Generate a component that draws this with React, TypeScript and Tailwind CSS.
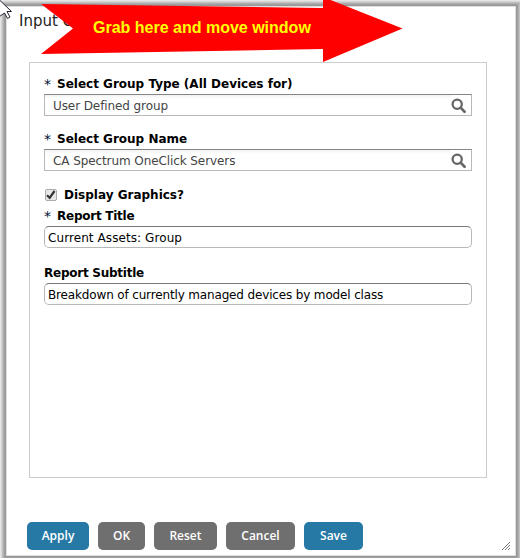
import type { ReactNode } from 'react';

// ── Small pieces ───────────────────────────────────────────────
function Label({ children, required, tight }: { children: ReactNode; required?: boolean; tight?: boolean }) {
  return (
    <div className="flex h-4 items-center whitespace-nowrap text-xs font-bold leading-4 text-black">
      {required && <span className="w-[13px] text-sm font-normal text-[#013]">*</span>}
      <span className={tight ? 'tracking-[-0.25px]' : ''}>{children}</span>
    </div>
  );
}

function SearchIcon() {
  return (
    <svg width="17" height="17" viewBox="0 0 17 17" fill="none" stroke="#666">
      <circle cx="6.2" cy="7.2" r="4.6" strokeWidth="2.3" />
      <path d="M9.8 10.9l3.8 3.9" strokeWidth="2.7" strokeLinecap="round" />
    </svg>
  );
}

function LookupField({ value }: { value: string }) {
  return (
    <div className="flex h-[22px] items-center border border-[#b8b8b8] border-t-[#858585] bg-white">
      <div className="flex h-full flex-1 items-center bg-gradient-to-b from-[#f3f3f3] to-white to-20% pl-2 pt-0.5 text-xs tracking-[-0.09px] text-[#444]">
        <span className="whitespace-nowrap">{value}</span>
      </div>
      <div className="flex h-full w-5 items-end pb-px">
        <SearchIcon />
      </div>
    </div>
  );
}

function TextField({ value, tracking }: { value: string; tracking: string }) {
  return (
    <div className="flex h-[22px] items-center rounded-[5px] border border-[#b8b8b8] border-t-[#777] bg-white pl-[3px] pt-px text-xs text-black">
      <span className={`whitespace-nowrap ${tracking}`}>{value}</span>
    </div>
  );
}

const BUTTONS = [
  { label: 'Apply', style: 'w-[62px] bg-[#2679a5]' },
  { label: 'OK', style: 'w-[47px] bg-[#6f6f6f]' },
  { label: 'Reset', style: 'w-[63px] bg-[#6f6f6f]' },
  { label: 'Cancel', style: 'w-[69px] bg-[#6f6f6f]' },
  { label: 'Save', style: 'w-[59px] bg-[#2679a5]' },
];

// ── Overlays ───────────────────────────────────────────────────
function GrabArrow() {
  return (
    <div className="absolute left-[41px] top-0 h-[62px] w-[362px]">
      <svg className="absolute inset-0" width="362" height="62" viewBox="0 0 362 62">
        <path d="M0 4L282 8V-3L361.5 28.5L282 62V49L0 54L32 28.5Z" fill="#f00" />
      </svg>
      <span className="absolute left-[52px] top-[19px] whitespace-nowrap font-['Liberation_Sans',sans-serif] text-base font-bold leading-[18px] text-[#ff0]">
        Grab here and move window
      </span>
    </div>
  );
}

function Cursor() {
  return (
    <svg className="absolute left-0 top-0" width="13" height="20" viewBox="0 0 13 20">
      <path d="M-.5 0L11.5 11.5H7L10 17L7.5 18.5L4.5 13L-.5 16.5Z" fill="#fff" stroke="#223" />
    </svg>
  );
}

function ResizeGrip() {
  return (
    <svg className="absolute bottom-2 right-2.5" width="8" height="8" viewBox="0 0 8 8" stroke="#777">
      <path d="M0 8L8 0M3 8L8 3M6 8L8 6" />
    </svg>
  );
}

// ── Dialog ─────────────────────────────────────────────────────
export default function App() {
  return (
    <div className="relative flex h-[558px] w-[520px] overflow-hidden bg-[#e5e5e5] pb-[3px] pl-[7px] pr-[5px] pt-[7px] font-['DejaVu_Sans',sans-serif]">
      <div className="flex flex-1 flex-col bg-white shadow-[0_0_0_1px_#dedede,0_0_0_2px_#999,0_0_0_3px_#a0a0a0,0_0_0_4px_#aeaeae,0_0_0_5px_#c2c2c2,0_0_0_6px_#d6d6d6]">
        <header className="h-[55px] pl-3 pt-[5px] text-[15px] leading-[18px] text-[#222]">Input C</header>

        <main className="ml-[22px] flex h-[416px] w-[458px] flex-col border border-[#ccc] px-3.5 pt-[13px]">
          <Label required>Select Group Type (All Devices for)</Label>
          <div className="mt-0.5"><LookupField value="User Defined group" /></div>

          <div className="mt-[15px]"><Label required>Select Group Name</Label></div>
          <div className="mt-0.5"><LookupField value="CA Spectrum OneClick Servers" /></div>

          <div className="mt-4 flex h-4 items-center">
            <span className="ml-px flex size-3 items-center justify-center rounded-[2px] border border-[#aaa] bg-[#e8e8e8]">
              <svg width="10" height="10" viewBox="0 0 10 10" fill="none" stroke="#333" strokeWidth="2.2">
                <path d="M1 5.2L3.7 7.8L8.5 1" />
              </svg>
            </span>
            <div className="ml-[7px]"><Label>Display Graphics?</Label></div>
          </div>

          <div className="mt-[5px]"><Label required tight>Report Title</Label></div>
          <div className="mt-0.5"><TextField value="Current Assets: Group" tracking="tracking-[0.08px]" /></div>

          <div className="mt-[17px]"><Label tight>Report Subtitle</Label></div>
          <div className="mt-0.5">
            <TextField value="Breakdown of currently managed devices by model class" tracking="tracking-[-0.15px]" />
          </div>
        </main>

        <footer className="mt-11 flex gap-[9px] pl-5">
          {BUTTONS.map((button) => (
            <button
              key={button.label}
              className={`h-7 rounded-[5px] font-['Open_Sans',sans-serif] text-xs font-semibold leading-7 text-white ${button.style}`}
            >
              {button.label}
            </button>
          ))}
        </footer>
      </div>

      <ResizeGrip />
      <GrabArrow />
      <Cursor />
    </div>
  );
}
